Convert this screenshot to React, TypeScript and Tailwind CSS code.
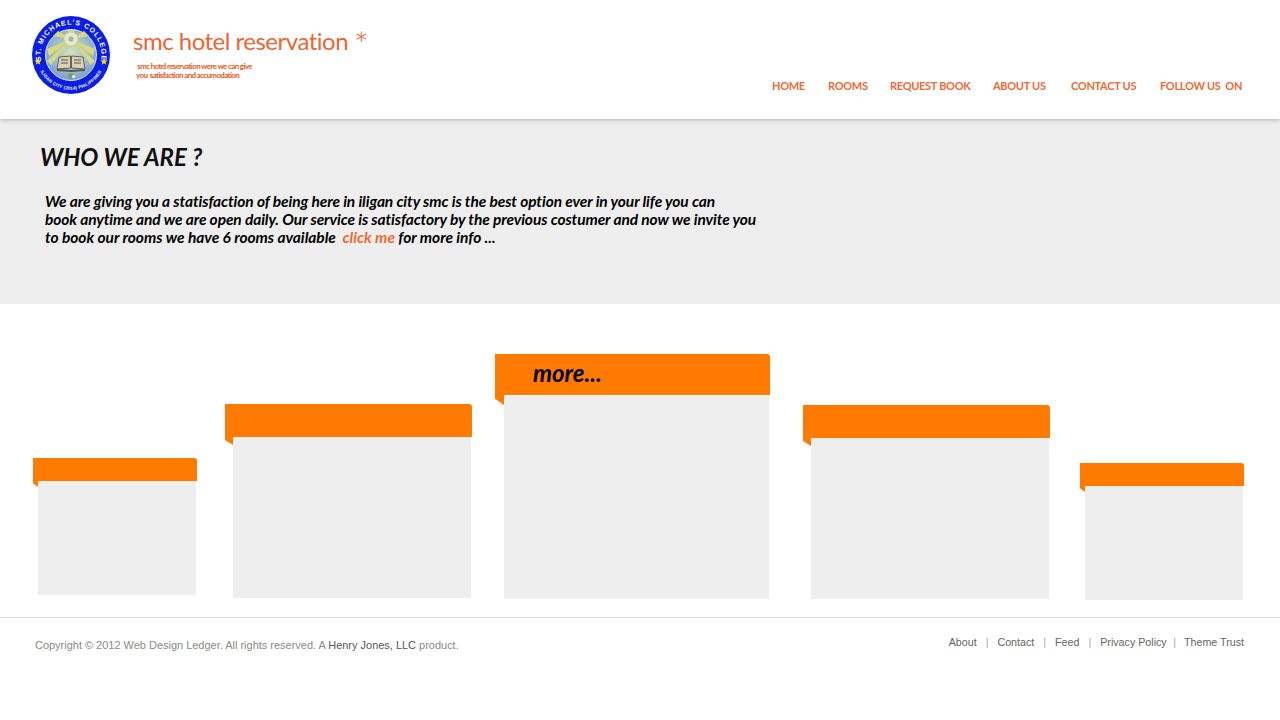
const navLinks = [
  { label: "HOME", className: "w-[32px]" },
  { label: "ROOMS", className: "w-[40px] ml-[24px]" },
  { label: "REQUEST BOOK", className: "w-[81px] ml-[22px]" },
  { label: "ABOUT US", className: "w-[53px] ml-[22px]" },
  { label: "CONTACT US", className: "w-[64px] ml-[25px]" },
  { label: "FOLLOW US  ON", className: "w-[81px] ml-[25px]" },
];

const footerLinks = ["About", "Contact", "Feed", "Privacy Policy", "Theme Trust"];

function Logo() {
  return (
    <svg width="80" height="80" viewBox="0 0 80 80" className="shrink-0">
      <defs>
        <radialGradient id="sky" cx="50%" cy="45%" r="60%">
          <stop offset="0%" stopColor="#d6e0b8" />
          <stop offset="60%" stopColor="#9dbccf" />
          <stop offset="100%" stopColor="#6a96da" />
        </radialGradient>
        <path id="top-arc" d="M10.3 47 A30.5 30.5 0 1 1 69.7 47" />
        <path id="bottom-arc" d="M6.4 48 A34.5 34.5 0 0 0 73.6 48" />
      </defs>
      <circle cx="40" cy="40" r="39" fill="#0a1ee6" />
      <circle cx="40" cy="40" r="25.5" fill="url(#sky)" stroke="#dfe6f5" strokeWidth="1" />
      <path d="M40 24 L16 34 L18 41Z M40 24 L64 34 L62 41Z M40 24 L22 21 L27 16Z M40 24 L58 21 L53 16Z M40 24 L16 46 L20 50Z M40 24 L64 46 L60 50Z M40 24 L36 15 L44 15Z" fill="#d9d97e" />
      <circle cx="40" cy="24" r="7" fill="#e4e9d2" stroke="#c9cf62" strokeWidth="1.6" strokeDasharray="1 1" />
      <circle cx="40" cy="24" r="2.6" fill="#aeb0a0" />
      <path d="M28 42 L39.5 41 L39.5 53 L26 54Z" fill="#d9d0b8" stroke="#4f4638" strokeWidth="0.8" />
      <path d="M52 42 L40.5 41 L40.5 53 L54 54Z" fill="#d9d0b8" stroke="#4f4638" strokeWidth="0.8" />
      <path d="M26 54 L40 55 L54 54 L54 56 L40 57 L26 56Z" fill="#5f5342" />
      <path d="M30 45H37M30 48H37M43 45H50M43 48H50" stroke="#4f4638" strokeWidth="0.9" />
      <circle cx="40" cy="61" r="3" fill="#7f9c5e" />
      <circle cx="42.5" cy="61.5" r="1.6" fill="#eef0e0" />
      <text fill="#ffffff" fontFamily="'Liberation Sans', sans-serif" fontSize="7" fontWeight="700" letterSpacing="1">
        <textPath href="#top-arc" startOffset="50%" textAnchor="middle">ST. MICHAEL'S COLLEGE</textPath>
      </text>
      <text fill="#ffffff" fontFamily="'Liberation Sans', sans-serif" fontSize="4.4" fontWeight="700" letterSpacing="0.2">
        <textPath href="#bottom-arc" startOffset="50%" textAnchor="middle">ILIGAN CITY (2014) PHILIPPINES</textPath>
      </text>
      <polygon points="7,43 8,45.6 10.6,45.6 8.5,47.2 9.3,49.8 7,48.2 4.7,49.8 5.5,47.2 3.4,45.6 6,45.6" fill="#ffe600" />
      <polygon points="73,43 74,45.6 76.6,45.6 74.5,47.2 75.3,49.8 73,48.2 70.7,49.8 71.5,47.2 69.4,45.6 72,45.6" fill="#ffe600" />
    </svg>
  );
}

function Card({
  className,
  barHeight,
  bodyClassName,
  foldClassName,
  children,
}: {
  className: string;
  barHeight: string;
  bodyClassName: string;
  foldClassName: string;
  children?: React.ReactNode;
}) {
  return (
    <div className={"relative shrink-0 " + className}>
      <div className={"bg-[#ff7a00] rounded-tr-[3px] " + barHeight}>{children}</div>
      <div className={"mr-[1px] bg-[#eeeeee] " + bodyClassName} />
      <svg viewBox="0 0 9 11" preserveAspectRatio="none" className={"absolute left-0 " + foldClassName}>
        <polygon points="0,0 9,0 9,11 0,4" fill="#ff7a00" />
      </svg>
    </div>
  );
}

export default function App() {
  return (
    <div className="min-h-[720px] bg-white font-['Lato',sans-serif]">
      <header className="relative z-10 flex h-[119px] bg-white pl-[31px] pr-[39px] shadow-[0_1px_4px_rgba(0,0,0,0.25)]">
        <div className="mt-[15px]">
          <Logo />
        </div>
        <div className="ml-[22px] pt-[25px]">
          <h1 className="whitespace-nowrap text-[24px] leading-[32px] tracking-[-0.5px] text-[#ee6534]">
            smc hotel reservation{" "}
            <span className="relative top-[8px] text-[36px] font-light leading-[0] tracking-normal">*</span>
          </h1>
          <p className="ml-[3px] mt-[5px] whitespace-pre text-[8px] font-bold leading-[9px] tracking-[-0.65px] text-[#ea5a20]">
            {" smc hotel reservation were we can give\nyou  satisfaction and accumodation"}
          </p>
        </div>
        <nav className="ml-auto mt-[79px] flex h-[14px]">
          {navLinks.map((link) => (
            <a key={link.label} className={"whitespace-pre text-[11px] font-bold leading-[14px] tracking-[-0.3px] text-[#ee6a35] " + link.className}>
              {link.label}
            </a>
          ))}
        </nav>
      </header>

      <section className="h-[185px] bg-[#eeeeee] pl-[40px] pt-[23px]">
        <h2 className="text-[24px] font-bold italic leading-[30px] tracking-[-0.05px] text-[#111111]">WHO WE ARE ?</h2>
        <p className="ml-[5px] mt-[20px] text-[15.5px] font-bold italic leading-[18px] tracking-[-0.1px] text-black">
          We are giving you a statisfaction of being here in iligan city smc is the best option ever in your life you can
          <br />
          book anytime and we are open daily. Our service is satisfactory by the previous costumer and now we invite you
          <br />
          <span className="tracking-[-0.03px]">
            to book our rooms we have 6 rooms available&nbsp; <span className="text-[#ee6a35]">click me</span> for more info ...
          </span>
        </p>
      </section>

      <section className="flex h-[313px] items-start pl-[33px]">
        <div className="mt-[154px]">
          <Card className="w-[164px]" barHeight="h-[23px]" bodyClassName="ml-[5px] h-[114px]" foldClassName="top-[23px] h-[6px] w-[5px]" />
        </div>
        <div className="ml-[28px] mt-[100px]">
          <Card className="w-[247px]" barHeight="h-[33px]" bodyClassName="ml-[8px] h-[161px]" foldClassName="top-[33px] h-[8px] w-[8px]" />
        </div>
        <div className="ml-[23px] mt-[50px]">
          <Card className="w-[275px]" barHeight="h-[41px]" bodyClassName="ml-[9px] mt-[1px] h-[203px]" foldClassName="top-[41px] h-[10px] w-[9px]">
            <span className="block pl-[38px] text-[24px] font-bold italic leading-[38px] text-black">more...</span>
          </Card>
        </div>
        <div className="ml-[33px] mt-[101px]">
          <Card className="w-[247px]" barHeight="h-[33px]" bodyClassName="ml-[8px] h-[161px]" foldClassName="top-[33px] h-[8px] w-[8px]" />
        </div>
        <div className="ml-[30px] mt-[159px]">
          <Card className="w-[164px]" barHeight="h-[23px]" bodyClassName="ml-[5px] h-[114px]" foldClassName="top-[23px] h-[6px] w-[5px]" />
        </div>
      </section>

      <footer className="flex border-t border-[#dddddd] pl-[35px] pr-[36px] font-['Liberation_Sans',sans-serif]">
        <p className="mt-[21px] text-[10.98px] leading-[13px] text-[#8a8a85]">
          Copyright © 2012 Web Design Ledger. All rights reserved. A <span className="text-[#555555]">Henry Jones, LLC</span> product.
        </p>
        <div className="ml-auto mt-[18px] flex text-[10.7px] leading-[13px] text-[#666660]">
          {footerLinks.map((link, index) => (
            <span key={link} className="flex">
              {index > 0 && <span className={"text-[#aaaaaa] " + (index === 4 ? "ml-[6.5px] mr-[8px]" : "mx-[9px]")}>|</span>}
              {link}
            </span>
          ))}
        </div>
      </footer>
    </div>
  );
}
